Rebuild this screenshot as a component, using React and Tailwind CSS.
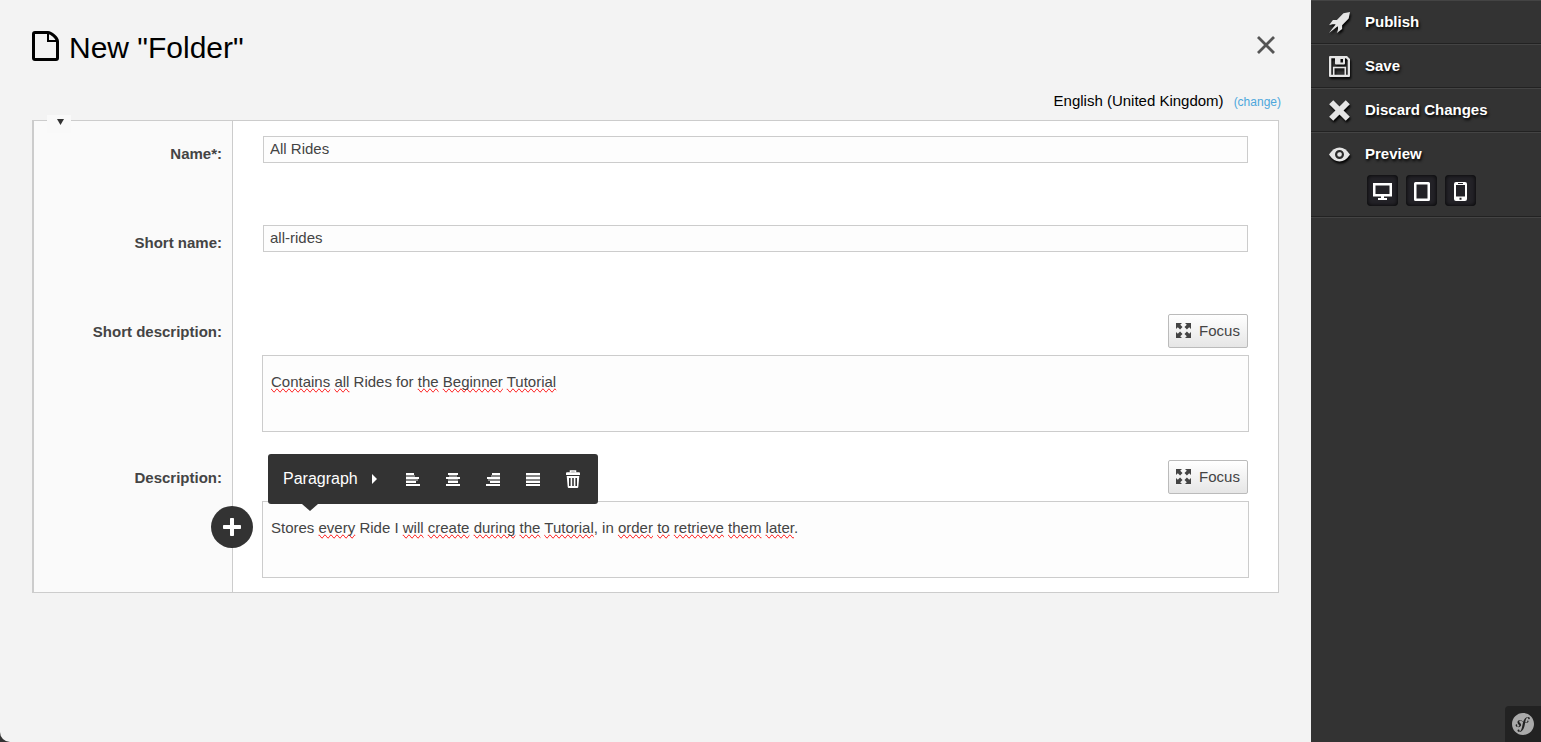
import React from "react";
import { ImRocket } from "react-icons/im";
import { SiSymfony } from "react-icons/si";

function FileIcon() {
  return (
    <svg className="h-[30px] w-[27px] shrink-0" viewBox="0 0 27 30" fill="none" stroke="currentColor" aria-hidden="true">
      <path d="M3 1.500H16C19 1.500 25.500 7 25.500 10.500V27Q25.500 28.500 24 28.500H3Q1.500 28.500 1.500 27V3Q1.500 1.500 3 1.500Z" strokeWidth="3" strokeLinejoin="round" />
      <path d="M16 2V10H25" strokeWidth="2" />
    </svg>
  );
}

function CloseIcon() {
  return (
    <svg className="size-[18px]" viewBox="0 0 18 18" fill="none" stroke="currentColor" strokeWidth="2.8" aria-hidden="true">
      <path d="M1 1L17 17M17 1L1 17" />
    </svg>
  );
}

function SaveIcon({ className }) {
  return (
    <svg className={className} viewBox="0 0 21 21" fill="currentColor" aria-hidden="true">
      <path fillRule="evenodd" d="M1 0H18L21 3V20Q21 21 20 21H1Q0 21 0 20V1Q0 0 1 0ZM2.300 2.300V18.700H18.700V4L17 2.300Z" />
      <path fillRule="evenodd" d="M6 1H16V7.500Q16 8.500 15 8.500H7Q6 8.500 6 7.500ZM11.500 3V6.500H14V3Z" />
      <path d="M4.700 19V11.500H16.300V19" fill="none" stroke="currentColor" strokeWidth="1.600" />
    </svg>
  );
}

function DiscardIcon({ className }) {
  return (
    <svg className={className} viewBox="0 0 21 21" fill="none" stroke="currentColor" strokeWidth="5.800" aria-hidden="true">
      <path d="M2.200 2.200L18.800 18.800M18.800 2.200L2.200 18.800" />
    </svg>
  );
}

function EyeIcon({ className }) {
  return (
    <svg className={className} viewBox="0 0 21 21" aria-hidden="true">
      <path d="M0 10.500Q4.500 3.500 10.500 3.500T21 10.500Q16.500 17.500 10.500 17.500T0 10.500Z" fill="currentColor" />
      <circle cx="10.500" cy="10.500" r="3.400" fill="none" stroke="#2b2b2b" strokeWidth="2.200" />
      <circle cx="11.300" cy="9.700" r="1.200" fill="currentColor" />
    </svg>
  );
}

function ExpandIcon() {
  return (
    <svg className="mb-[2px] size-[15px]" viewBox="0 0 15 15" fill="currentColor" aria-hidden="true">
      <path d="M0 0H6L4.200 1.800L6.500 4.100L4.100 6.500L1.800 4.200L0 6Z" />
      <path d="M15 0H9L10.800 1.800L8.500 4.100L10.900 6.500L13.200 4.200L15 6Z" />
      <path d="M0 15H6L4.200 13.200L6.500 10.900L4.100 8.500L1.800 10.800L0 9Z" />
      <path d="M15 15H9L10.800 13.200L8.500 10.900L10.900 8.500L13.200 10.800L15 9Z" />
    </svg>
  );
}

function DesktopIcon() {
  return (
    <svg className="h-[17px] w-[19px]" viewBox="0 0 19 17" fill="currentColor" aria-hidden="true">
      <path fillRule="evenodd" d="M0 0H19V13.500H0ZM2.500 2.500V11H16.500V2.500Z" />
      <path d="M8 13H11V15H14V17H5V15H8Z" />
    </svg>
  );
}

function TabletIcon() {
  return (
    <svg className="h-[19px] w-4" viewBox="0 0 16 19" fill="currentColor" aria-hidden="true">
      <path fillRule="evenodd" d="M1.500 0H14.500Q16 0 16 1.500V17.500Q16 19 14.500 19H1.500Q0 19 0 17.500V1.500Q0 0 1.500 0ZM2.500 2.500V16.500H13.500V2.500Z" />
    </svg>
  );
}

function PhoneIcon() {
  return (
    <svg className="h-[19px] w-[13px]" viewBox="0 0 13 19" fill="currentColor" aria-hidden="true">
      <path fillRule="evenodd" d="M2 0H11Q13 0 13 2V17Q13 19 11 19H2Q0 19 0 17V2Q0 0 2 0ZM2 3V14.500H11V3ZM4 1V2H9V1ZM5.500 15.800V17.800H7.500V15.800Z" />
    </svg>
  );
}

const alignIcons = {
  left: {
    lines: "M0 0H8V2H0ZM0 4H13V6H0ZM0 8H10V10H0ZM0 11H14V13H0Z",
    shade: "M0 2H9V4H0ZM0 6H12V8H0Z",
  },
  center: {
    lines: "M2 0H12V2H2ZM0 4H14V6H0ZM2 8H12V10H2ZM0 11H14V13H0Z",
    shade: "M3 2H11V4H3ZM2 6H12V8H2Z",
  },
  right: {
    lines: "M6 0H14V2H6ZM1 4H14V6H1ZM4 8H14V10H4ZM0 11H14V13H0Z",
    shade: "M5 2H14V4H5ZM2 6H14V8H2Z",
  },
  justify: {
    lines: "M0 0H14V2H0ZM0 4H14V6H0ZM0 8H14V10H0ZM0 11H14V13H0Z",
    shade: "M0 2H14V4H0ZM0 6H14V8H0Z",
  },
};

function AlignIcon({ kind }) {
  return (
    <svg className="h-[13px] w-[14px]" viewBox="0 0 14 13" fill="currentColor" aria-hidden="true">
      <path d={alignIcons[kind].lines} />
      <path d={alignIcons[kind].shade} opacity="0.4" />
    </svg>
  );
}

function TrashIcon() {
  return (
    <svg className="h-[18px] w-[14px]" viewBox="0 0 14 18" aria-hidden="true">
      <path d="M4.500 2.500V1H9.500V2.500" fill="none" stroke="currentColor" strokeWidth="1.500" />
      <path d="M1 2.200H13Q14 2.200 14 3.200V5H0V3.200Q0 2.200 1 2.200Z" fill="currentColor" />
      <path fillRule="evenodd" fill="currentColor" d="M0.700 6H13.300L12.300 17Q12.200 18 11.200 18H2.800Q1.800 18 1.700 17ZM3 8V16H4.600V8ZM6.200 8V16H7.800V8ZM9.400 8V16H11V8Z" />
    </svg>
  );
}

function Row({ label, id, htmlFor, children }) {
  return (
    <div className="flex">
      <div className="w-[199px] shrink-0 pt-[23px] pr-[11px] text-right font-bold leading-5">
        <label id={id} htmlFor={htmlFor}>{label}</label>
      </div>
      <div className="min-w-0 flex-1 px-[29px] pt-[15px]">{children}</div>
    </div>
  );
}

function TextField({ id, value }) {
  return (
    <div className="h-[74px] px-px">
      <input id={id} defaultValue={value} className="block h-[27px] w-full border border-[#ccc] bg-[#fdfdfd] px-[6px] pb-[2px] outline-none" />
    </div>
  );
}

function Bad({ children }) {
  return <span className="[text-decoration-line:spelling-error] [text-decoration-skip-ink:none]">{children}</span>;
}

function Editor({ labelledBy, tools, children }) {
  return (
    <div className="pb-[13px]">
      <div className="mb-[7px] flex justify-end px-px">
        <button type="button" className="flex h-[34px] w-20 items-center justify-center gap-2 rounded-xs border border-[#bbb] bg-linear-to-b from-white to-[#e6e6e6]">
          <ExpandIcon />
          Focus
        </button>
      </div>
      <div className="relative">
        <div
          role="textbox"
          aria-multiline="true"
          aria-labelledby={labelledBy}
          contentEditable
          suppressContentEditableWarning
          spellCheck={false}
          className="h-[77px] border border-[#ccc] bg-[#fdfdfd] px-2 py-4 leading-5 outline-none"
        >
          {children}
        </div>
        {tools}
      </div>
    </div>
  );
}

function EditorTools() {
  const button = "flex h-[50px] w-10 items-center justify-center";
  return (
    <>
      <button type="button" aria-label="Add block" className="absolute top-[5px] -left-[51px] flex size-[42px] items-center justify-center rounded-full bg-[#333] text-white">
        <svg className="size-[18px]" viewBox="0 0 18 18" fill="currentColor" aria-hidden="true">
          <path d="M7.800 0H10.200Q11 0 11 .8V7H17.200Q18 7 18 7.800V10.200Q18 11 17.200 11H11V17.200Q11 18 10.200 18H7.800Q7 18 7 17.200V11H.8Q0 11 0 10.200V7.800Q0 7 .8 7H7V.8Q7 0 7.800 0Z" />
        </svg>
      </button>
      <div role="toolbar" aria-label="Block formatting" className="absolute -top-[47px] left-[6px] flex h-[50px] w-[330px] items-center rounded-[3px] bg-[#333] pl-[15px] text-white">
        <button type="button" className="flex w-[110px] items-center gap-[14px] text-base">
          Paragraph
          <svg className="h-[10px] w-[5px]" viewBox="0 0 5 10" fill="currentColor" aria-hidden="true">
            <path d="M0 0L5 5L0 10Z" />
          </svg>
        </button>
        <button type="button" aria-label="Align left" className={button}><AlignIcon kind="left" /></button>
        <button type="button" aria-label="Align centre" className={button}><AlignIcon kind="center" /></button>
        <button type="button" aria-label="Align right" className={button}><AlignIcon kind="right" /></button>
        <button type="button" aria-label="Justify" className={button}><AlignIcon kind="justify" /></button>
        <button type="button" aria-label="Delete block" className={button}><TrashIcon /></button>
        <svg className="absolute top-[50px] left-[34px] h-[7px] w-4" viewBox="0 0 16 7" fill="#333" aria-hidden="true">
          <path d="M0 0H16L8 7Z" />
        </svg>
      </div>
    </>
  );
}

function Action({ icon: Icon, children }) {
  return (
    <button type="button" className="flex h-[42px] w-full items-center gap-[15px] pl-[18px] text-left font-bold text-white [text-shadow:1px_2px_3px_#000]">
      <Icon className="size-[21px] text-[#e5e5e5] drop-shadow-[1px_2px_1px_#000]" aria-hidden="true" />
      {children}
    </button>
  );
}

export default function App() {
  const item = "border-t border-b border-t-[#444] border-b-[#222]";
  const device = "flex size-[31px] items-center justify-center rounded-sm bg-[#232227] pt-px text-white shadow-[inset_0_0_4px_#000]";
  return (
    <div className="flex min-h-screen bg-[#333] font-['Liberation_Sans',Arial,sans-serif] text-[15px] text-[#444]">
      <main className="min-w-0 flex-1 rounded-bl-[10px] bg-[#f3f3f3] px-8 pt-[26px]">
        <header className="flex items-start justify-between">
          <div className="flex items-center gap-[10px] text-black">
            <FileIcon />
            <h1 className="pt-1 text-[30px] leading-9">New "Folder"</h1>
          </div>
          <button type="button" aria-label="Close" className="mt-[10px] mr-1 text-[#555]"><CloseIcon /></button>
        </header>
        <div className="mt-[25px] mb-2 flex items-baseline justify-end gap-[10px] leading-5 text-black">
          English (United Kingdom)
          <a href="#language" className="-mr-[2px] text-xs leading-5 text-[#4da7dc]">(change)</a>
        </div>
        <form className="relative border border-l-2 border-[#ccc] bg-[linear-gradient(to_right,#fafafa_198px,#ccc_198px,#ccc_199px,#fff_199px)] pb-px">
          <button type="button" aria-label="Collapse" className="absolute -top-[6px] left-[13px] flex h-[18px] w-6 items-center justify-center bg-[#f9f9f9] pb-1 pl-[2px]">
            <svg className="h-[6px] w-[7px]" viewBox="0 0 7 6" fill="#333" aria-hidden="true">
              <path d="M0 0H7L3.500 6Z" />
            </svg>
          </button>
          <Row label="Name*:" htmlFor="name"><TextField id="name" value="All Rides" /></Row>
          <Row label="Short name:" htmlFor="short-name"><TextField id="short-name" value="all-rides" /></Row>
          <Row label="Short description:" id="short-description">
            <Editor labelledBy="short-description">
              <Bad>Contains</Bad> <Bad>all</Bad> Rides for <Bad>the</Bad> <Bad>Beginner</Bad> <Bad>Tutorial</Bad>
            </Editor>
          </Row>
          <Row label="Description:" id="description">
            <Editor labelledBy="description" tools={<EditorTools />}>
              Stores <Bad>every</Bad> Ride I <Bad>will</Bad> <Bad>create</Bad> <Bad>during</Bad> <Bad>the</Bad> <Bad>Tutorial</Bad>, in <Bad>order</Bad> <Bad>to</Bad> <Bad>retrieve</Bad> <Bad>them</Bad> <Bad>later</Bad>.
            </Editor>
          </Row>
        </form>
      </main>
      <aside className="relative w-[230px] shrink-0">
        <ul className="border-b border-[#444]">
          <li className={item}><Action icon={ImRocket}>Publish</Action></li>
          <li className={item}><Action icon={SaveIcon}>Save</Action></li>
          <li className={item}><Action icon={DiscardIcon}>Discard Changes</Action></li>
          <li className={item}>
            <Action icon={EyeIcon}>Preview</Action>
            <div className="flex gap-2 pb-[10px] pl-14">
              <button type="button" aria-label="Desktop preview" className={device}><DesktopIcon /></button>
              <button type="button" aria-label="Tablet preview" className={device}><TabletIcon /></button>
              <button type="button" aria-label="Phone preview" className={device}><PhoneIcon /></button>
            </div>
          </li>
        </ul>
        <button type="button" aria-label="Symfony toolbar" className="absolute right-0 bottom-0 flex size-9 items-center justify-center rounded-tl bg-[#222] text-[#aaa]">
          <SiSymfony className="size-[22px]" aria-hidden="true" />
        </button>
      </aside>
    </div>
  );
}
